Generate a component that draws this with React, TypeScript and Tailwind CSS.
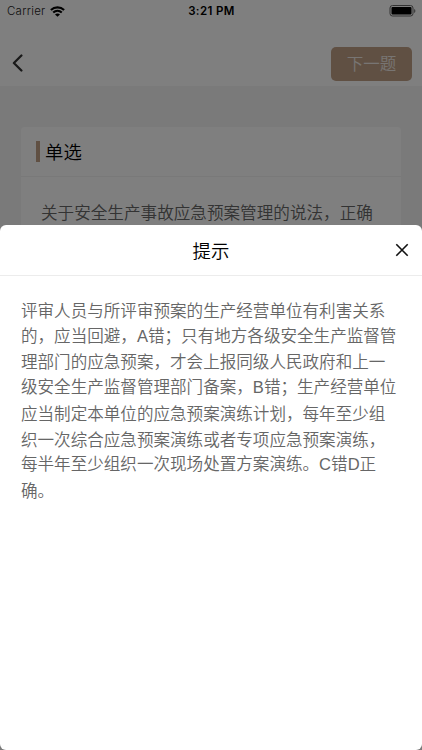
const hintLines = [
  { text: "评审人员与所评审预案的生产经营单位有利害关系", height: "h-[25px]" },
  { text: "的，应当回避，A错；只有地方各级安全生产监督管", height: "h-[26px]" },
  { text: "理部门的应急预案，才会上报同级人民政府和上一", height: "h-[25px]" },
  { text: "级安全生产监督管理部门备案，B错；生产经营单位", height: "h-[27px]" },
  { text: "应当制定本单位的应急预案演练计划，每年至少组", height: "h-[26px]" },
  { text: "织一次综合应急预案演练或者专项应急预案演练，", height: "h-[24px]" },
  { text: "每半年至少组织一次现场处置方案演练。C错D正", height: "h-[27px]" },
  { text: "确。", height: "h-[26px]" },
];

const StatusBar = () => (
  <div className="grid h-[22px] grid-cols-3 items-center pl-[7px] pr-[6px] font-['Inter','Liberation_Sans',sans-serif] text-[11.5px] leading-none text-black">
    <div className="flex items-center gap-[5px] pt-px">
      <span className="tracking-[0.25px] text-[#222]">Carrier</span>
      <svg className="mb-px h-[11px] w-[15px]" viewBox="0 0 15 11" fill="none" stroke="currentColor" strokeWidth="2.1">
        <path d="M.9 4.1C4.6.5 10.4.5 14.1 4.1" />
        <path d="M3.2 6.6c2.5-2.3 6.1-2.3 8.6 0" />
        <path d="M5 8.4c1.5-1.2 3.5-1.2 5 0L7.5 10.8z" fill="currentColor" stroke="none" />
      </svg>
    </div>
    <span className="pt-px text-center font-semibold tracking-[0.4px]">3:21 PM</span>
    <svg className="h-[12px] w-[27px] justify-self-end" viewBox="0 0 27 12">
      <rect x="1" y=".5" width="23" height="10.5" rx="2.5" fill="none" stroke="#666" />
      <rect x="2.5" y="2" width="20" height="7.5" rx="1" fill="#000" />
      <path d="M25.2 4v4c1.6-.5 1.6-3.5 0-4z" fill="#666" />
    </svg>
  </div>
);

const QuestionPage = () => (
  <div className="flex h-full flex-col bg-[#f5f5f5]">
    <div className="h-[86px] bg-white">
      <StatusBar />
      <div className="flex items-center justify-between pl-3 pr-[10px] pt-[25px]">
        <svg className="mb-[3px] h-[18px] w-[12px]" viewBox="0 0 12 18" fill="none" stroke="#333" strokeWidth="2.3" strokeLinecap="round" strokeLinejoin="round">
          <path d="M9.4 1.5 1.9 9l7.5 7.5" />
        </svg>
        <button className="h-[34px] w-[81px] rounded-[5px] bg-[#c0a087] pb-px text-[16.5px] leading-none text-[#f0ebe6]">
          下一题
        </button>
      </div>
    </div>
    <div className="mx-[21px] mt-[41px] flex-1 rounded-[4px] bg-white">
      <div className="flex h-[50px] items-center gap-[5px] border-b border-[#f2f2f2] pl-[15px]">
        <div className="h-[21px] w-1 bg-[#c0a087]" />
        <h2 className="text-[18.4px] leading-none text-black">单选</h2>
      </div>
      <p className="whitespace-nowrap pl-5 pt-[21px] text-[16.6px] leading-[28px] text-[#666]">
        关于安全生产事故应急预案管理的说法，正确
      </p>
    </div>
  </div>
);

const HintSheet = () => (
  <div className="h-[525px] w-full rounded-[6px] bg-white">
    <div className="grid h-[51px] grid-cols-[60px_1fr_60px] items-center border-b border-[#ececec]">
      <h1 className="col-start-2 text-center text-[18.4px] leading-none text-black">提示</h1>
      <button className="justify-self-end pr-[13px]" aria-label="关闭">
        <svg className="h-[14px] w-[14px]" viewBox="0 0 14 14" fill="none" stroke="#111" strokeWidth="1.6">
          <path d="m1.3 1.3 11.4 11.4M12.7 1.3 1.3 12.7" />
        </svg>
      </button>
    </div>
    <div className="whitespace-nowrap pl-[21px] pt-[23px] font-['Liberation_Sans','Noto_Sans_CJK_SC',sans-serif] text-[16.57px] leading-[26px] text-[#666]">
      {hintLines.map((line) => (
        <p key={line.text} className={line.height}>
          {line.text}
        </p>
      ))}
    </div>
  </div>
);

export default function App() {
  return (
    <div className="relative h-[750px] w-[422px] overflow-hidden font-['Noto_Sans_CJK_SC',sans-serif] font-[350]">
      <QuestionPage />
      <div className="absolute inset-0 flex items-end bg-black/50">
        <HintSheet />
      </div>
    </div>
  );
}
